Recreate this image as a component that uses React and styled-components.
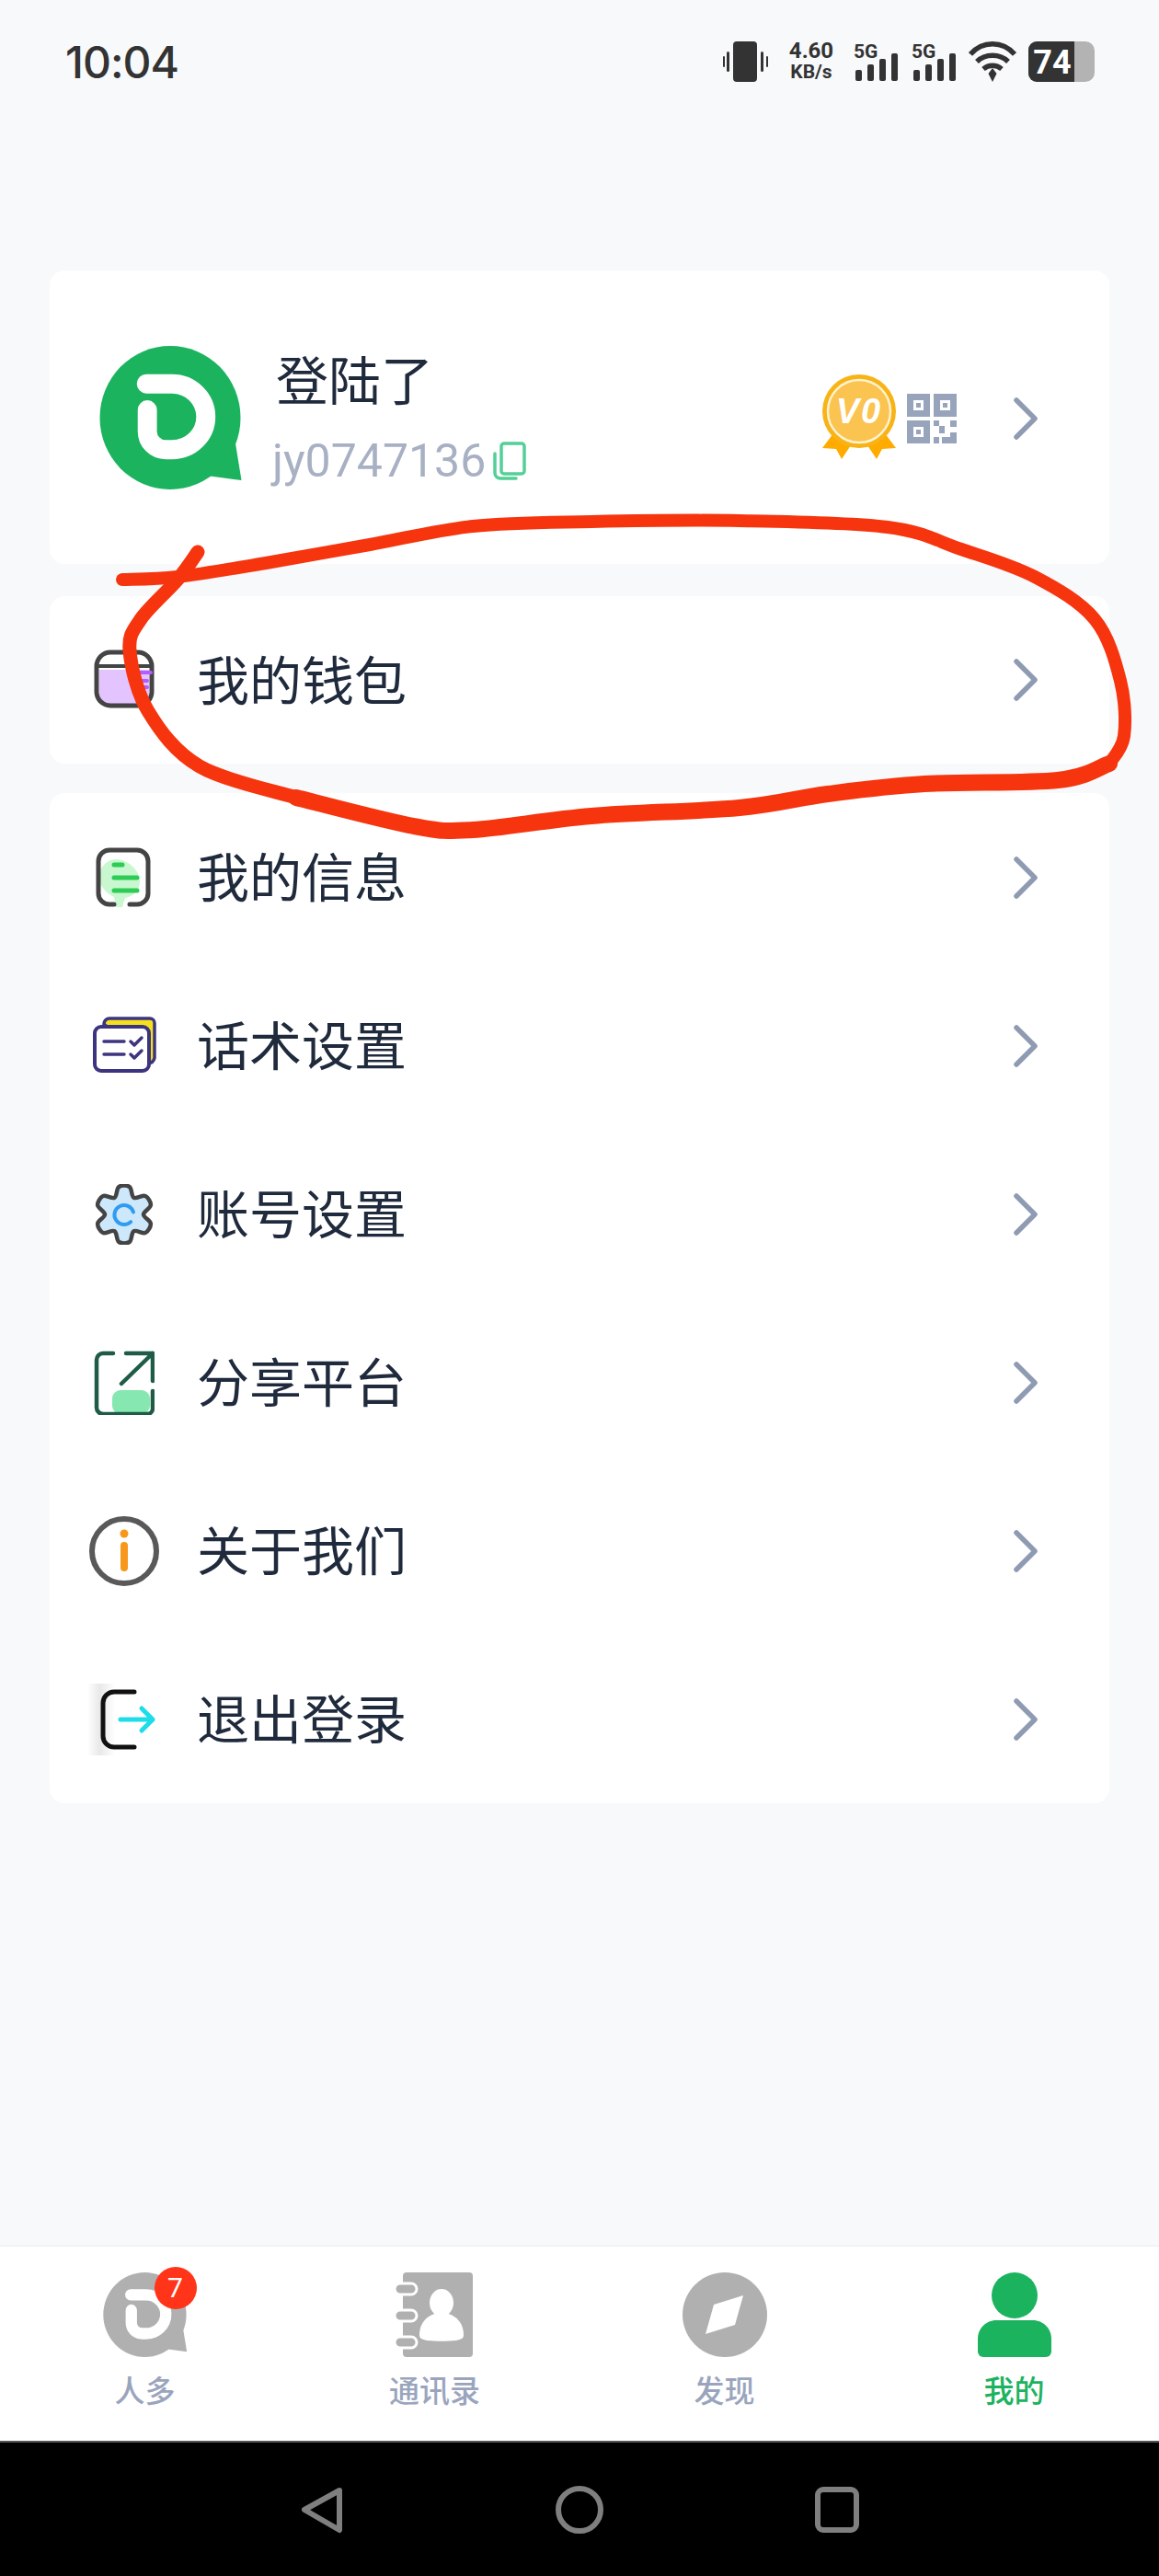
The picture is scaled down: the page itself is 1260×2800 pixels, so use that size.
import React from "react";
import styled, { createGlobalStyle } from "styled-components";

const GlobalStyle = createGlobalStyle`
  html, body {
    margin: 0;
    padding: 0;
    background: #f8f9fb;
  }
  * {
    box-sizing: border-box;
  }
  svg {
    display: block;
    flex: none;
  }
`;

const FONT = `"Noto Sans CJK SC", "Noto Sans", sans-serif`;

const Page = styled.div`
  position: relative;
  width: 1260px;
  height: 2800px;
  display: flex;
  flex-direction: column;
  background: #f8f9fb;
  font-family: ${FONT};
  overflow: hidden;
`;

const StatusBar = styled.div`
  height: 134px;
  padding: 0 70px 0 71px;
  display: flex;
  align-items: center;
  justify-content: space-between;
  color: #333;
`;

const Time = styled.div`
  font-family: Inter, "Liberation Sans", sans-serif;
  font-size: 48px;
  font-weight: 500;
  letter-spacing: -1px;
  color: #333;
`;

const StatusIcons = styled.div`
  display: flex;
  align-items: center;
  gap: 13px;
`;

const Speed = styled.div`
  width: 56px;
  margin: 0 5px;
  font-family: Roboto, sans-serif;
  font-weight: 700;
  text-align: center;
  color: #333;
  font-size: 24px;
  line-height: 23px;

  span {
    display: block;
    font-size: 21px;
  }
`;

const Main = styled.div`
  flex: 1;
  padding: 160px 54px 0;
  display: flex;
  flex-direction: column;
`;

const Card = styled.div`
  background: #fff;
  border-radius: 16px;
  margin-bottom: ${(p) => p.$gap || 0}px;
`;

const Profile = styled(Card)`
  height: 319px;
  padding: 82px 78px 0 54px;
  display: flex;
  align-items: flex-start;
`;

const ProfileText = styled.div`
  margin-left: 32px;
  flex: 1;
`;

const Name = styled.div`
  padding-left: 4px;
  font-size: 57px;
  line-height: 68px;
  color: #1f2a3c;
`;

const Account = styled.div`
  margin-top: 26px;
  display: flex;
  align-items: center;
  gap: 8px;
  font-family: Roboto, sans-serif;
  font-size: 50px;
  line-height: 62px;
  color: #a8b0c3;
`;

const ProfileActions = styled.div`
  margin-top: 31px;
  display: flex;
  align-items: flex-start;
`;

const ChevronSlot = styled.div`
  margin: 25px 0 0 62px;
`;

const Row = styled.div`
  height: ${(p) => p.$h || 183}px;
  padding: 0 78px 0 48px;
  display: flex;
  align-items: center;
`;

const RowIcon = styled.div`
  width: 66px;
  height: 66px;
  flex: none;
`;

const RowLabel = styled.div`
  margin: 0 0 7px 46px;
  flex: 1;
  font-size: 57px;
  color: #1f2a3c;
`;

const TabBar = styled.div`
  height: 213px;
  background: #fff;
  border-top: 2px solid #f2f3f5;
  display: grid;
  grid-template-columns: repeat(4, 315px);
`;

const Tab = styled.div`
  padding-top: 28px;
  display: flex;
  flex-direction: column;
  align-items: center;
`;

const TabIconWrap = styled.div`
  position: relative;
  height: 92px;
  display: flex;
  justify-content: center;
`;

const Badge = styled.div`
  position: absolute;
  right: -10px;
  top: -6px;
  width: 46px;
  height: 46px;
  border-radius: 50%;
  background: #ff3419;
  color: #fff;
  font-family: Roboto, sans-serif;
  font-size: 30px;
  line-height: 46px;
  text-align: center;
`;

const TabLabel = styled.div`
  margin-top: 13px;
  font-size: 33px;
  line-height: 44px;
  font-weight: 500;
  color: ${(p) => (p.$active ? "#1cb35f" : "#9aa5bd")};
`;

const NavBar = styled.div`
  height: 147px;
  background: #000;
  border-top: 2px solid #555;
  display: flex;
  align-items: center;
  padding: 0 326px 0 327px;
  justify-content: space-between;
`;

const Ink = styled.svg`
  position: absolute;
  left: 0;
  top: 0;
  pointer-events: none;
`;

const WifiSvg = styled.svg`
  margin-left: -1px;
`;

const QrSvg = styled.svg`
  margin: 21px 0 0 10px;
`;

const ScriptSvg = styled.svg`
  margin: 1px 0 0 -1px;
`;

const ShareSvg = styled.svg`
  margin-top: -2px;
`;

const InfoSvg = styled.svg`
  margin: -6px 0 0 -6px;
`;

const LogoutSvg = styled.svg`
  overflow: visible;
`;

const ContactsSvg = styled.svg`
  margin-right: 4px;
`;

// catmull-rom through the points, for the hand drawn line and the gear
const smooth = (pts, closed) => {
  const at = (i) =>
    closed ? pts[(i + pts.length) % pts.length] : pts[Math.max(0, Math.min(pts.length - 1, i))];
  const count = closed ? pts.length : pts.length - 1;
  let d = `M${pts[0][0]} ${pts[0][1]}`;
  for (let i = 0; i < count; i++) {
    const [p0, p1, p2, p3] = [at(i - 1), at(i), at(i + 1), at(i + 2)];
    const c1 = [p1[0] + (p2[0] - p0[0]) / 6, p1[1] + (p2[1] - p0[1]) / 6];
    const c2 = [p2[0] - (p3[0] - p1[0]) / 6, p2[1] - (p3[1] - p1[1]) / 6];
    d += `C${c1[0]} ${c1[1]} ${c2[0]} ${c2[1]} ${p2[0]} ${p2[1]}`;
  }
  return closed ? d + "z" : d;
};

const inkTop = [[133, 630], [193, 627], [289, 612], [402, 592], [514, 572], [643, 567], [804, 566], [965, 573], [1045, 597], [1125, 627], [1190, 673], [1218, 740], [1222, 800], [1206, 830]];
const inkBottom = [[1206, 830], [1150, 848], [1005, 852], [900, 863], [804, 878], [643, 887], [514, 902], [450, 898], [322, 867]];
const inkLeft = [[322, 867], [217, 833], [161, 773], [141, 707], [153, 673], [193, 630], [215, 600]];

// six lobes: two points on each lobe, one in each valley
const gearPoints = Array.from({ length: 6 }, (_, i) => i * 60 - 90).flatMap((deg) =>
  [
    [deg - 11, 30.5],
    [deg + 11, 30.5],
    [deg + 30, 21],
  ].map(([d, r]) => [33 + r * Math.cos((d * Math.PI) / 180), 33 + r * Math.sin((d * Math.PI) / 180)])
);

const Chevron = () => (
  <svg width="26" height="46" viewBox="0 0 26 46">
    <path d="M3 3l20 20L3 43" fill="none" stroke="#8f9bb3" strokeWidth="5.5" strokeLinecap="round" strokeLinejoin="round" />
  </svg>
);

const VibrateIcon = () => (
  <svg width="50" height="44" viewBox="0 0 50 44">
    <rect x="11" y="0" width="26" height="44" rx="4" fill="#333" />
    <rect x="4" y="11" width="3" height="22" rx="1.5" fill="#333" />
    <rect x="0" y="16" width="2" height="12" rx="1" fill="#333" />
    <rect x="41" y="11" width="3" height="22" rx="1.5" fill="#333" />
    <rect x="47" y="16" width="2" height="12" rx="1" fill="#333" />
  </svg>
);

const SignalIcon = () => (
  <svg width="50" height="44" viewBox="0 0 50 44">
    <text x="0" y="18" fontFamily="Roboto, sans-serif" fontWeight="700" fontSize="21" fill="#333">5G</text>
    <rect x="2" y="31" width="7" height="12" rx="2" fill="#333" />
    <rect x="15" y="25" width="7" height="18" rx="2" fill="#333" />
    <rect x="28" y="19" width="7" height="24" rx="2" fill="#333" />
    <rect x="41" y="13" width="7" height="30" rx="2" fill="#333" />
  </svg>
);

const WifiIcon = () => (
  <WifiSvg width="52" height="44" viewBox="0 0 52 44">
    <g fill="none" stroke="#333" strokeWidth="5.500">
      <path d="M2 14c13-15 35-15 48 0" />
      <path d="M9 22c9-9 25-9 34 0" />
      <path d="M16 30c6-5 14-5 20 0" />
    </g>
    <path d="M26 29l4.500 6-4.500 9-4.500-9z" fill="#333" />
  </WifiSvg>
);

const BatteryIcon = () => (
  <svg width="72" height="44" viewBox="0 0 72 44">
    <rect x="0" y="0" width="72" height="44" rx="10" fill="#b3b3b3" />
    <path d="M9 0h41v44H9a9 9 0 0 1-9-9V9a9 9 0 0 1 9-9z" fill="#333" />
    <text x="26" y="35" textAnchor="middle" fontFamily="Roboto, sans-serif" fontWeight="700" fontSize="36" fill="#fff">74</text>
  </svg>
);

const Logo = ({ size, color }) => (
  <svg width={size} height={size} viewBox="0 0 156 157">
    <ellipse cx="77" cy="78.500" rx="77" ry="78.500" fill={color} />
    <path d="M148 104l7 43-38-5z" fill={color} />
    <path d="M51 41.500H79a37 36 0 0 1 0 72H72a20 20 0 0 1-20-20V70" fill="none" stroke="#fff" strokeWidth="21" strokeLinecap="round" />
  </svg>
);

const CopyIcon = () => (
  <svg width="36" height="42" viewBox="0 0 36 42">
    <g fill="none" stroke="#54cf97" strokeWidth="3.500" strokeLinecap="round">
      <rect x="9" y="2" width="25" height="33" rx="3" />
      <path d="M2 13v21a6 6 0 0 0 6 6h17" />
    </g>
  </svg>
);

const Medal = () => (
  <svg width="84" height="92" viewBox="0 0 84 92">
    <path d="M17 60L2 80l15 1 6 11 16-24zM67 60l15 20-15 1-6 11-16-24z" fill="#ffab00" />
    <circle cx="42" cy="40" r="40" fill="#f8b316" />
    <circle cx="42" cy="40" r="34" fill="#fbc34f" stroke="#fff3d2" strokeWidth="2.500" />
    <text x="42" y="53" textAnchor="middle" letterSpacing="2" fontFamily="Liberation Sans, sans-serif" fontStyle="italic" fontWeight="700" fontSize="38" fill="#fff">V0</text>
  </svg>
);

const QrIcon = () => (
  <QrSvg width="54" height="54" viewBox="0 0 54 54">
    <g fill="#98a4bb">
      <path fillRule="evenodd" d="M0 0h25v25H0zM7 7v11h11V7zM29 0h25v25H29zM36 7v11h11V7zM0 29h25v25H0zM7 36v11h11V36z" />
      <rect x="10" y="10" width="5" height="5" />
      <rect x="39" y="10" width="5" height="5" />
      <rect x="10" y="39" width="5" height="5" />
      <rect x="29" y="29" width="6" height="6" />
      <rect x="47" y="29" width="7" height="7" />
      <rect x="35" y="35" width="6" height="8" />
      <rect x="47" y="42" width="7" height="12" />
      <rect x="38" y="47" width="16" height="7" />
      <rect x="29" y="47" width="6" height="7" />
    </g>
  </QrSvg>
);

const WalletIcon = () => (
  <svg width="66" height="66" viewBox="0 0 66 66">
    <path d="M6 22h54v30a10 10 0 0 1-10 10H16A10 10 0 0 1 6 52z" fill="#e3c4ff" />
    <g fill="none" strokeLinecap="round">
      <rect x="3" y="3" width="60" height="58" rx="15" stroke="#444" strokeWidth="5" />
      <path d="M3 18h60" stroke="#444" strokeWidth="4" />
      <path d="M48 25h14M52 34h6M52 41h6" stroke="#b45cff" strokeWidth="4" />
    </g>
  </svg>
);

const MessageIcon = () => (
  <svg width="66" height="66" viewBox="0 0 66 66">
    <path d="M24 13c12 0 26 11 26 24 0 12-10 17-16 18l-3 10h-7l-2-11C14 50 6 43 6 32 6 22 14 13 24 13z" fill="#c9f7d0" />
    <path d="M22 62H17A12 12 0 0 1 5 50V15A12 12 0 0 1 17 3h30a12 12 0 0 1 12 12v35a12 12 0 0 1-12 12h-8" fill="none" stroke="#444" strokeWidth="5" strokeLinecap="round" />
    <path d="M22 19h9M22 33h25M22 47h25" fill="none" stroke="#2dcc55" strokeWidth="5" strokeLinecap="round" />
  </svg>
);

const ScriptIcon = () => (
  <ScriptSvg width="70" height="62" viewBox="0 0 70 62">
    <path d="M12 8a6 6 0 0 1 6-6h44a5 5 0 0 1 5 5v38a8 8 0 0 1-7 6z" fill="#f5e020" stroke="#3d3480" strokeWidth="3.500" />
    <rect x="2" y="11" width="59" height="48" rx="7" fill="#fff" stroke="#3d3480" strokeWidth="4" />
    <g fill="none" stroke="#3d3480" strokeWidth="3.500" strokeLinecap="round" strokeLinejoin="round">
      <path d="M12 27h22M12 41h22M41 27l4 4 8-8M41 41l4 4 8-8" />
    </g>
  </ScriptSvg>
);

const GearIcon = () => (
  <svg width="66" height="66" viewBox="0 0 66 66">
    <path d={smooth(gearPoints, true)} fill="#cde8fb" stroke="#444" strokeWidth="4.500" strokeLinejoin="round" />
    <path d="M42 28a10.500 10.500 0 1 0 0 11" fill="none" stroke="#2f9cf2" strokeWidth="4" strokeLinecap="round" transform="rotate(15 33 33)" />
  </svg>
);

const ShareIcon = () => (
  <ShareSvg width="66" height="70" viewBox="0 0 66 70">
    <rect x="20" y="43" width="41" height="26" rx="9" fill="#86e8b0" />
    <path d="M21 3H10a7 7 0 0 0-7 7v52a7 7 0 0 0 7 7h48a6 6 0 0 0 6-6V44" fill="none" stroke="#1f5c45" strokeWidth="4.500" strokeLinecap="round" />
    <path d="M30 36L64 3M35 3h29v30" fill="none" stroke="#1f5c45" strokeWidth="4.500" strokeLinecap="round" strokeLinejoin="round" />
  </ShareSvg>
);

const InfoIcon = () => (
  <InfoSvg width="78" height="78" viewBox="0 0 78 78">
    <circle cx="39" cy="39" r="35" fill="#fff" stroke="#595959" strokeWidth="6" />
    <circle cx="39" cy="20" r="4.500" fill="#f7981d" />
    <rect x="35" y="29" width="8" height="32" rx="4" fill="#f7981d" />
  </InfoSvg>
);

const LogoutIcon = () => (
  <LogoutSvg width="66" height="66" viewBox="0 0 66 66">
    <defs>
      <linearGradient id="logoutShade" x1="0" x2="1" y1="0" y2="0">
        <stop offset="0" stopColor="#fff" />
        <stop offset="0.45" stopColor="#e8e8e8" />
        <stop offset="1" stopColor="#fff" />
      </linearGradient>
    </defs>
    <rect x="-7" y="-6" width="30" height="78" fill="url(#logoutShade)" />
    <path d="M44 3H22A12 12 0 0 0 10 15v36a12 12 0 0 0 12 12h22" fill="none" stroke="#111" strokeWidth="5" strokeLinecap="round" />
    <path d="M29 33h35M52 21l12 12-12 12" fill="none" stroke="#1fdcea" strokeWidth="5" strokeLinecap="round" strokeLinejoin="round" />
  </LogoutSvg>
);

const ContactsIcon = () => (
  <ContactsSvg width="86" height="92" viewBox="0 0 86 92">
    <path d="M10 4a4 4 0 0 1 4-4h68a4 4 0 0 1 4 4v84a4 4 0 0 1-4 4H14a4 4 0 0 1-4-4z" fill="#b0b0b0" />
    <g stroke="#fff" strokeWidth="3" fill="#b0b0b0">
      <rect x="1" y="12" width="24" height="12" rx="6" />
      <rect x="1" y="41" width="24" height="12" rx="6" />
      <rect x="1" y="70" width="24" height="12" rx="6" />
    </g>
    <ellipse cx="52" cy="33" rx="13" ry="15" fill="#fff" />
    <path d="M28 68c0-14 10-24 24-24s24 10 24 24c0 4-3 5-8 6-10 1-22 1-32 0-5-1-8-2-8-6z" fill="#fff" />
  </ContactsSvg>
);

const CompassIcon = () => (
  <svg width="92" height="92" viewBox="0 0 92 92">
    <circle cx="46" cy="46" r="46" fill="#b0b0b0" />
    <path d="M66 25L57 57 25 67l9-32z" fill="#fff" />
  </svg>
);

const MeIcon = () => (
  <svg width="82" height="92" viewBox="0 0 82 92">
    <circle cx="41" cy="25" r="25" fill="#1cb35f" />
    <path d="M1 72c0-11 9-20 20-20h40c11 0 20 9 20 20v14a6 6 0 0 1-6 6H7a6 6 0 0 1-6-6z" fill="#1cb35f" />
  </svg>
);

const NavBack = () => (
  <svg width="46" height="54" viewBox="0 0 46 54">
    <path d="M42 6L4 27l38 22z" fill="none" stroke="#7f7f7f" strokeWidth="6" strokeLinejoin="round" />
  </svg>
);

const NavHome = () => (
  <svg width="52" height="52" viewBox="0 0 52 52">
    <circle cx="26" cy="26" r="23" fill="none" stroke="#7f7f7f" strokeWidth="6" />
  </svg>
);

const NavRecent = () => (
  <svg width="48" height="50" viewBox="0 0 48 50">
    <rect x="3" y="3" width="42" height="44" rx="6" fill="none" stroke="#7f7f7f" strokeWidth="6" />
  </svg>
);

const menu = [
  { label: "我的信息", Icon: MessageIcon },
  { label: "话术设置", Icon: ScriptIcon },
  { label: "账号设置", Icon: GearIcon },
  { label: "分享平台", Icon: ShareIcon },
  { label: "关于我们", Icon: InfoIcon },
  { label: "退出登录", Icon: LogoutIcon },
];

export default function App() {
  return (
    <Page>
      <GlobalStyle />
      <StatusBar>
        <Time>10:04</Time>
        <StatusIcons>
          <VibrateIcon />
          <Speed>
            4.60
            <span>KB/s</span>
          </Speed>
          <SignalIcon />
          <SignalIcon />
          <WifiIcon />
          <BatteryIcon />
        </StatusIcons>
      </StatusBar>

      <Main>
        <Profile $gap={35}>
          <Logo size={156} color="#1cb35f" />
          <ProfileText>
            <Name>登陆了</Name>
            <Account>
              jy0747136
              <CopyIcon />
            </Account>
          </ProfileText>
          <ProfileActions>
            <Medal />
            <QrIcon />
            <ChevronSlot>
              <Chevron />
            </ChevronSlot>
          </ProfileActions>
        </Profile>

        <Card $gap={32}>
          <Row $h={182}>
            <RowIcon>
              <WalletIcon />
            </RowIcon>
            <RowLabel>我的钱包</RowLabel>
            <Chevron />
          </Row>
        </Card>

        <Card>
          {menu.map(({ label, Icon }) => (
            <Row key={label}>
              <RowIcon>
                <Icon />
              </RowIcon>
              <RowLabel>{label}</RowLabel>
              <Chevron />
            </Row>
          ))}
        </Card>
      </Main>

      <TabBar>
        <Tab>
          <TabIconWrap>
            <Logo size={92} color="#b0b0b0" />
            <Badge>7</Badge>
          </TabIconWrap>
          <TabLabel>人多</TabLabel>
        </Tab>
        <Tab>
          <TabIconWrap>
            <ContactsIcon />
          </TabIconWrap>
          <TabLabel>通讯录</TabLabel>
        </Tab>
        <Tab>
          <TabIconWrap>
            <CompassIcon />
          </TabIconWrap>
          <TabLabel>发现</TabLabel>
        </Tab>
        <Tab>
          <TabIconWrap>
            <MeIcon />
          </TabIconWrap>
          <TabLabel $active>我的</TabLabel>
        </Tab>
      </TabBar>

      <NavBar>
        <NavBack />
        <NavHome />
        <NavRecent />
      </NavBar>

      {/* hand drawn red circle over the wallet row */}
      <Ink width="1260" height="2800" viewBox="0 0 1260 2800" fill="none" stroke="#f6350f" strokeLinecap="round" strokeLinejoin="round">
        <path d={smooth(inkTop)} strokeWidth="14" />
        <path d={smooth(inkBottom)} strokeWidth="18" />
        <path d={smooth(inkLeft)} strokeWidth="15" />
      </Ink>
    </Page>
  );
}
